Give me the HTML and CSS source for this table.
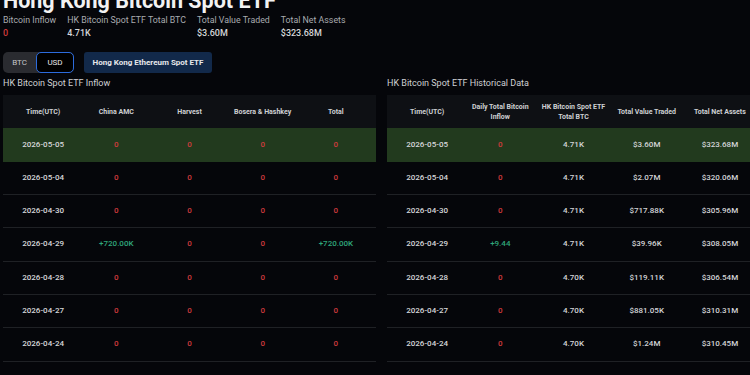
FILE: index.html
```html
<!DOCTYPE html>
<html lang="en">
<head>
<meta charset="utf-8">
<title>Hong Kong Bitcoin Spot ETF</title>
<link rel="stylesheet" href="styles.css">
</head>
<body>
<div class="page">
  <h1 class="title">Hong Kong Bitcoin Spot ETF</h1>
  <div class="stats">
    <div class="stat"><div class="stat-label">Bitcoin Inflow</div><div class="stat-value neg">0</div></div>
    <div class="stat"><div class="stat-label">HK Bitcoin Spot ETF Total BTC</div><div class="stat-value">4.71K</div></div>
    <div class="stat"><div class="stat-label">Total Value Traded</div><div class="stat-value">$3.60M</div></div>
    <div class="stat"><div class="stat-label">Total Net Assets</div><div class="stat-value">$323.68M</div></div>
  </div>
  <div class="controls">
    <div class="toggle">
      <span class="seg">BTC</span>
      <span class="seg active">USD</span>
    </div>
    <button class="eth-btn">Hong Kong Ethereum Spot ETF</button>
  </div>
  <div class="panels">
    <section class="panel">
      <h2 class="panel-title">HK Bitcoin Spot ETF Inflow</h2>
      <div class="card">
        <div class="row head"><span>Time(UTC)</span><span>China AMC</span><span>Harvest</span><span>Bosera &amp; Hashkey</span><span>Total</span></div>
        <div class="row hl"><span class="date">2026-05-05</span><span class="neg">0</span><span class="neg">0</span><span class="neg">0</span><span class="neg">0</span></div>
        <div class="row"><span class="date">2026-05-04</span><span class="neg">0</span><span class="neg">0</span><span class="neg">0</span><span class="neg">0</span></div>
        <div class="row"><span class="date">2026-04-30</span><span class="neg">0</span><span class="neg">0</span><span class="neg">0</span><span class="neg">0</span></div>
        <div class="row"><span class="date">2026-04-29</span><span class="pos">+720.00K</span><span class="neg">0</span><span class="neg">0</span><span class="pos">+720.00K</span></div>
        <div class="row"><span class="date">2026-04-28</span><span class="neg">0</span><span class="neg">0</span><span class="neg">0</span><span class="neg">0</span></div>
        <div class="row"><span class="date">2026-04-27</span><span class="neg">0</span><span class="neg">0</span><span class="neg">0</span><span class="neg">0</span></div>
        <div class="row"><span class="date">2026-04-24</span><span class="neg">0</span><span class="neg">0</span><span class="neg">0</span><span class="neg">0</span></div>
      </div>
    </section>
    <section class="panel">
      <h2 class="panel-title">HK Bitcoin Spot ETF Historical Data</h2>
      <div class="card">
        <div class="row head"><span>Time(UTC)</span><span>Daily Total Bitcoin Inflow</span><span>HK Bitcoin Spot ETF Total BTC</span><span>Total Value Traded</span><span>Total Net Assets</span></div>
        <div class="row hl"><span class="date">2026-05-05</span><span class="neg">0</span><span>4.71K</span><span>$3.60M</span><span>$323.68M</span></div>
        <div class="row"><span class="date">2026-05-04</span><span class="neg">0</span><span>4.71K</span><span>$2.07M</span><span>$320.06M</span></div>
        <div class="row"><span class="date">2026-04-30</span><span class="neg">0</span><span>4.71K</span><span>$717.88K</span><span>$305.96M</span></div>
        <div class="row"><span class="date">2026-04-29</span><span class="pos">+9.44</span><span>4.71K</span><span>$39.96K</span><span>$308.05M</span></div>
        <div class="row"><span class="date">2026-04-28</span><span class="neg">0</span><span>4.70K</span><span>$119.11K</span><span>$306.54M</span></div>
        <div class="row"><span class="date">2026-04-27</span><span class="neg">0</span><span>4.70K</span><span>$881.05K</span><span>$310.31M</span></div>
        <div class="row"><span class="date">2026-04-24</span><span class="neg">0</span><span>4.70K</span><span>$1.24M</span><span>$310.45M</span></div>
      </div>
    </section>
  </div>
</div>
</body>
</html>
```

FILE: styles.css
```css
html, body {
  margin: 0;
  padding: 0;
  background: #05060a;
  overflow: hidden;
}
body {
  font-family: Roboto, "Liberation Sans", sans-serif;
  color: #d2d3d6;
}
.page {
  width: 760px;
  padding-left: 3px;
  box-sizing: border-box;
}
.title {
  margin: -10px 0 0 0;
  font-size: 21.5px;
  line-height: 21px;
  font-weight: 700;
  color: #f2f2f2;
  white-space: nowrap;
}
.stats {
  display: flex;
  gap: 11px;
  margin-top: 3px;
}
.stat-label {
  font-size: 8.8px;
  line-height: 12px;
  color: #a9abb0;
}
.stat-value {
  margin-top: 1px;
  font-size: 9px;
  line-height: 12px;
  font-weight: 500;
  color: #d4d5d8;
}
.neg { color: #cf3a3d; }
.pos { color: #2fa57a; }
.controls {
  display: flex;
  align-items: center;
  gap: 10px;
  margin-top: 13px;
  height: 21px;
}
.toggle {
  display: flex;
  height: 21px;
  background: #2a2b30;
  border-radius: 5px;
}
.seg {
  display: flex;
  align-items: center;
  justify-content: center;
  font-size: 8px;
  color: #c4c5c8;
  width: 33px;
}
.seg.active {
  width: 38px;
  background: #000;
  border: 1.5px solid #2c6bdc;
  border-radius: 5px;
  color: #e8e8ea;
  box-sizing: border-box;
}
.eth-btn {
  height: 21px;
  width: 128px;
  padding: 0;
  border: none;
  border-radius: 3px;
  background: #12294a;
  color: #e6e7ea;
  font-family: Roboto, "Liberation Sans", sans-serif;
  font-size: 8px;
  font-weight: 700;
}
.panels {
  display: flex;
  gap: 11px;
  margin-top: 4px;
}
.panel {
  width: 373px;
  flex: none;
}
.panel-title {
  margin: 0;
  font-size: 9px;
  line-height: 12px;
  font-weight: 400;
  color: #d0d1d4;
  white-space: nowrap;
}
.card {
  margin-top: 6px;
}
.row {
  display: grid;
  grid-template-columns: repeat(5, 1fr);
  align-items: center;
  height: 33.33px;
  padding: 0 3.5px;
  box-sizing: border-box;
  border-bottom: 1px solid #1f2125;
  font-size: 8px;
  font-weight: 500;
  text-align: center;
  color: #d3d4d7;
}
.row span {
  line-height: 10px;
}
.row.head {
  background: #0e1014;
  border-bottom: none;
  font-size: 7px;
  font-weight: 700;
  color: #cfd0d3;
}
.row.hl {
  background: #223a1e;
  border-bottom: none;
}
.date {
  color: #d6d7da;
}
```
